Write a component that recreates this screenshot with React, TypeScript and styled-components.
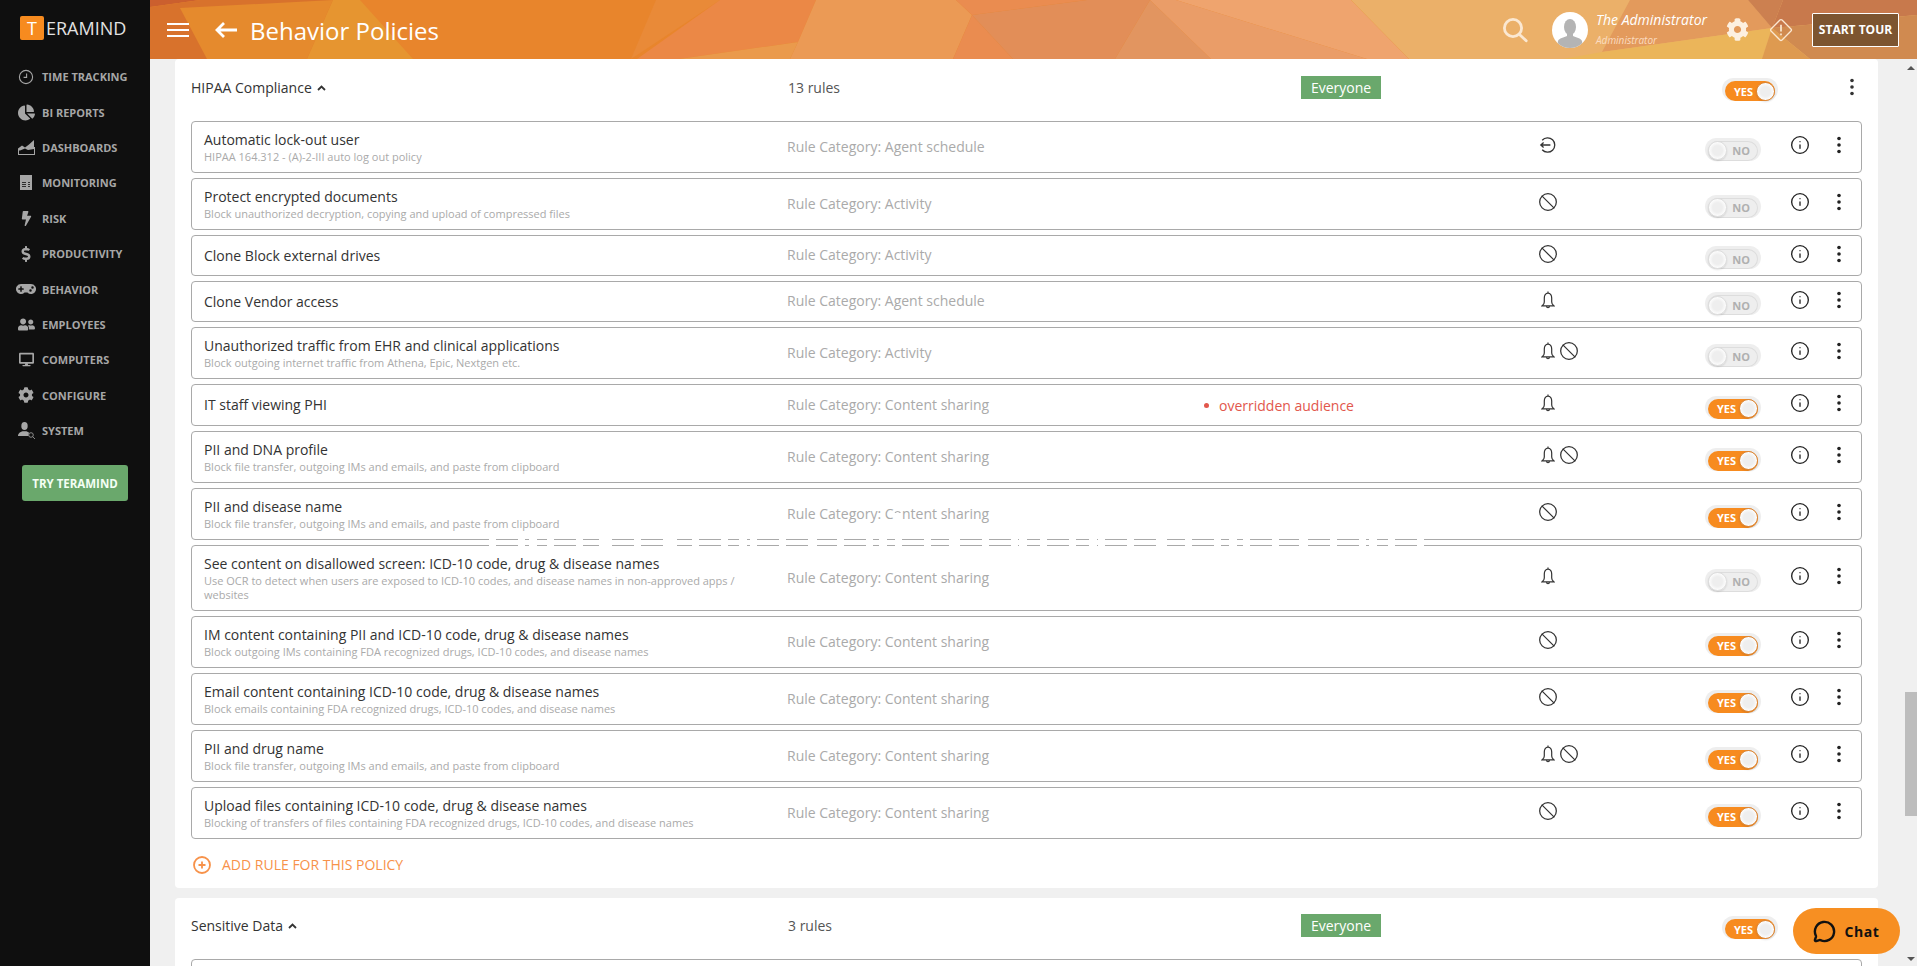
import { FC, ReactNode } from "react";
import styled, { createGlobalStyle } from "styled-components";
import { Ban, Info, MessageCircle } from "lucide-react";
import { FaBolt, FaChartPie, FaCog, FaDesktop, FaDollarSign, FaGamepad, FaUserFriends } from "react-icons/fa";

const GlobalStyle = createGlobalStyle`
    html, body {
        margin: 0;
        height: 100%;
        overflow: hidden;
        background: #f0f0f0;
        font-family: "Open Sans", "Liberation Sans", sans-serif;
    }
    * {
        box-sizing: border-box;
    }
`;

const colors = {
    orange: "#f78b1f",
    green: "#6aa86c",
    text: "#333",
    muted: "#aaa",
    border: "#a9a9a9",
    nav: "#a6a6a6",
};

const Shell = styled.div`
    display: flex;
    width: 100%;
    height: 100vh;
    overflow: hidden;
`;

const Sidebar = styled.nav`
    flex: 0 0 150px;
    background: #0f0f0f;
`;

const Logo = styled.div`
    display: flex;
    align-items: center;
    height: 59px;
    padding: 0 0 3px 20px;
`;

const LogoMark = styled.span`
    display: flex;
    align-items: center;
    justify-content: center;
    width: 24px;
    height: 24px;
    background: ${colors.orange};
    border-radius: 2px;
    color: #fff;
    font-size: 18px;
`;

const LogoText = styled.span`
    margin-left: 2px;
    color: #e2e2e2;
    font-size: 18px;
`;

const NavItem = styled.a`
    display: flex;
    align-items: center;
    height: 35.4px;
    padding-left: 16px;
    color: ${colors.nav};
    font-size: 11px;
    font-weight: 700;
`;

const NavIcon = styled.span`
    display: flex;
    align-items: center;
    justify-content: center;
    flex: 0 0 20px;
    margin-right: 6px;
    color: ${colors.nav};
`;

const TryButton = styled.button`
    display: block;
    width: 106px;
    height: 36px;
    margin: 17px 0 0 22px;
    padding: 0;
    border: 0;
    border-radius: 3px;
    background: ${colors.green};
    color: #f4fff4;
    font-family: inherit;
    font-size: 11.5px;
    font-weight: 700;
`;

const Main = styled.main`
    display: flex;
    flex: 1;
    flex-direction: column;
    min-width: 0;
`;

const Header = styled.header`
    position: relative;
    display: flex;
    flex: 0 0 59px;
    align-items: center;
    overflow: hidden;
    background: #e8852c;
    color: #fff;
`;

const HeaderArt = styled.svg`
    position: absolute;
    inset: 0;
    width: 100%;
    height: 100%;
`;

const HeaderGroup = styled.div`
    position: relative;
    display: flex;
    align-items: center;
`;

const Title = styled.h1`
    margin: 1px 0 0 13px;
    color: #fff;
    font-size: 24px;
    font-weight: 400;
`;

const HeaderRight = styled(HeaderGroup)`
    margin-left: auto;
    padding-right: 18px;
`;

const UserBlock = styled.div`
    display: flex;
    flex-direction: column;
    width: 128px;
    margin-left: 8px;
    font-style: italic;
`;

const UserName = styled.span`
    color: #fff;
    font-size: 14px;
    line-height: 20px;
`;

const UserRole = styled.span`
    color: #fbdcc0;
    font-size: 10px;
    line-height: 20px;
`;

const TourButton = styled.button`
    width: 87px;
    height: 34px;
    margin-left: 19px;
    padding: 0;
    border: 1px solid #fff;
    border-radius: 1px;
    background: #7d5530;
    color: #fff;
    font-family: inherit;
    font-size: 12px;
    font-weight: 700;
`;

const Body = styled.div`
    display: flex;
    flex: 1;
    min-height: 0;
`;

const Content = styled.div`
    flex: 1;
    min-width: 0;
    overflow: hidden;
    padding: 0 27px 0 25px;
`;

const Card = styled.section`
    margin-bottom: 10px;
    padding: 0 16px;
    background: #fff;
    border-radius: 4px;

    &:first-child {
        padding-top: 1px;
    }
`;

const CardHead = styled.div`
    display: grid;
    grid-template-columns: 597px 513px 80px 341px 56px 70px 8px;
    align-items: center;
    height: 55px;
    margin-bottom: 6px;
`;

const CardTitle = styled.div`
    display: flex;
    align-items: center;
    gap: 5px;
    color: ${colors.text};
    font-size: 14px;
`;

const RuleCount = styled.div`
    color: #555;
    font-size: 14px;
`;

const Badge = styled.div`
    height: 23px;
    background: ${colors.green};
    color: #fff;
    font-size: 14px;
    line-height: 23px;
    text-align: center;
`;

const RuleList = styled.div`
    display: flex;
    flex-direction: column;
    gap: 5px;
`;

const Row = styled.div<{ $glitch?: "top" | "bottom" }>`
    position: relative;
    display: grid;
    grid-template-columns: 583px 417px 334px 167px 56px 1fr;
    align-items: center;
    min-height: 41px;
    padding: 8px 0 8px 12px;
    border: 1px solid ${colors.border};
    border-radius: 4px;

    ${(p) =>
        p.$glitch &&
        `&::after {
            content: "";
            position: absolute;
            left: 275px;
            width: 963px;
            height: 1px;
            ${p.$glitch}: -1px;
            background:
                repeating-linear-gradient(90deg, transparent 0 62px, #fff 62px 70px),
                repeating-linear-gradient(90deg, transparent 0 22px, #fff 22px 29px);
        }`}
`;

const EmptyRow = styled(Row)`
    height: 52px;
`;

const RuleText = styled.div`
    padding-right: 30px;
`;

const RuleName = styled.div`
    color: ${colors.text};
    font-size: 14px;
    line-height: 20px;
`;

const RuleDesc = styled.div`
    color: ${colors.muted};
    font-size: 11px;
    line-height: 14px;
`;

const Category = styled.div`
    color: ${colors.muted};
    font-size: 14px;
    line-height: 18px;
    padding-bottom: 1px;
`;

const WornLetter = styled.span`
    color: transparent;
    background: linear-gradient(${colors.muted} 0 45%, transparent 45%);
    -webkit-background-clip: text;
    background-clip: text;
`;

const Override = styled.div`
    display: flex;
    align-items: center;
    min-height: 24px;
    color: #e2574c;
    font-size: 14px;
`;

const OverrideDot = styled.span`
    flex: 0 0 5px;
    height: 5px;
    margin-right: 10px;
    border-radius: 50%;
    background: #e2574c;
`;

const RuleIcons = styled.div`
    display: flex;
    align-items: center;
    gap: 1px;
    transform: translateY(-2px);
    color: #333;
`;

const MarkBox = styled.span`
    display: flex;
    align-items: center;
    justify-content: center;
    width: 20px;
    height: 20px;
`;

const Actions = styled.div`
    display: flex;
    align-items: center;
    gap: 26px;
    transform: translateY(-2px);
    padding-left: 29px;
    color: #222;
`;

const Halo = styled.div`
    width: 56px;
    height: 23px;
    transform: translateY(2px);
    padding: 3px 3px 0;
    border-radius: 12px;
    background: #eee;
`;

const Pill = styled.div<{ $on: boolean }>`
    display: flex;
    flex-direction: ${(p) => (p.$on ? "row" : "row-reverse")};
    align-items: center;
    justify-content: space-between;
    width: 50px;
    height: 20px;
    padding-left: ${(p) => (p.$on ? "9px" : "0")};
    padding-right: ${(p) => (p.$on ? "0" : "8px")};
    border-radius: 10px;
    background: ${(p) => (p.$on ? colors.orange : "#eee")};
    box-shadow: ${(p) => (p.$on ? "none" : "inset 0 0 0 1px #ddd")};
    color: ${(p) => (p.$on ? "#fff" : "#b0b0b0")};
    font-size: 11px;
    font-weight: 700;
`;

const Knob = styled.span<{ $on: boolean }>`
    width: 19px;
    height: 19px;
    border: 1px solid ${(p) => (p.$on ? "#d9873a" : "#ddd")};
    border-radius: 50%;
    background: radial-gradient(#eee 40%, #fff 75%);
    box-shadow: 0 1px 2px rgba(0, 0, 0, 0.12);
`;

const DotsWrap = styled.div`
    display: flex;
    justify-content: center;
    transform: translateY(-1px);
    color: #333;
`;

const AddRule = styled.div`
    display: flex;
    align-items: center;
    height: 49px;
    padding: 2px 0 0 2px;
    color: #f7924a;
    font-size: 14px;
`;

const AddIcon = styled.svg`
    margin-right: 11px;
`;

const Scrollbar = styled.div`
    position: relative;
    display: flex;
    flex: 0 0 12px;
    flex-direction: column;
    align-items: center;
    justify-content: space-between;
    padding: 7px 0 5px;
`;

const ScrollThumb = styled.div`
    position: absolute;
    top: 633px;
    left: 0;
    width: 12px;
    height: 124px;
    background: #bdbdbd;
`;

const ScrollArrow = styled.span<{ $down?: boolean }>`
    width: 0;
    height: 0;
    border-left: 4px solid transparent;
    border-right: 4px solid transparent;
    ${(p) => (p.$down ? "border-top" : "border-bottom")}: 4px solid #555;
`;

const ChatButton = styled.button`
    position: fixed;
    right: 17px;
    bottom: 12px;
    display: flex;
    align-items: center;
    justify-content: center;
    gap: 8px;
    width: 107px;
    height: 46px;
    padding: 0;
    border: 0;
    border-radius: 23px;
    background: #f78f22;
    color: #111;
    font-family: inherit;
    font-size: 14px;
    font-weight: 700;
    letter-spacing: 0.6px;
`;

const IconButton = styled.span<{ $left?: number }>`
    display: flex;
    margin-left: ${(p) => p.$left ?? 0}px;
`;

const Dots: FC = () => (
    <svg width="6" height="18" viewBox="0 0 6 18" fill="currentColor">
        <circle cx="3" cy="2.500" r="1.800" />
        <circle cx="3" cy="9" r="1.800" />
        <circle cx="3" cy="15.500" r="1.800" />
    </svg>
);

const Chevron: FC = () => (
    <svg width="9" height="6" viewBox="0 0 9 6" fill="none" stroke="#333" strokeWidth="1.800">
        <path d="M1 5l3.500-3.500L8 5" />
    </svg>
);

const BellIcon: FC = () => (
    <svg width="14" height="18" viewBox="0 0 14 18" fill="none" stroke="currentColor" strokeWidth="1.200">
        <path d="M7 .6v1.600M7 2.200c-2.500 0-3.700 2.200-3.700 4.800v4c0 1.700-.7 2.800-2.100 3.800h11.600c-1.400-1-2.100-2.100-2.100-3.800V7c0-2.600-1.200-4.800-3.700-4.800zM5.500 14.800c.1 2.600 2.900 2.600 3 0" />
    </svg>
);

const LockoutIcon: FC = () => (
    <svg width="18" height="18" viewBox="0 0 18 18" fill="none" stroke="currentColor" strokeWidth="1.300">
        <path d="M3.200 4.200A7.200 7.200 0 1 1 3.200 13.800M1.800 9h9.600M4.600 6.400L1.800 9l2.800 2.600" />
    </svg>
);

const ClockIcon: FC = () => (
    <svg width="16" height="16" viewBox="0 0 16 16" fill="none" stroke="currentColor" strokeWidth="1.100">
        <circle cx="8" cy="8" r="6.600" />
        <path d="M8.600 4.400v4H5.600" />
    </svg>
);

const AreaChartIcon: FC = () => (
    <svg width="17" height="15" viewBox="0 0 17 15" fill="currentColor">
        <path d="M0 8.500l4-3 3 2 4-3 5-4.500V9l-3 .5-3 .5-3-1.600L2 10.500H0z" />
        <path d="M0 9v6h17V7h-1v7H1V9z" />
    </svg>
);

const DocIcon: FC = () => (
    <svg width="12" height="15" viewBox="0 0 12 15">
        <path d="M0 0h12v15H0z" fill="currentColor" />
        <path d="M2 7.500h4M2 9.500h4M2 11.500h4M8 7.500h2M8 9.500h2M8 11.500h2" stroke="#0f0f0f" strokeWidth="0.800" />
    </svg>
);

const SystemIcon: FC = () => (
    <svg width="17" height="17" viewBox="0 0 17 17" fill="currentColor">
        <ellipse cx="6.500" cy="4" rx="3.200" ry="4" />
        <path d="M0 14c0-3 2.500-4 4.500-4.800h4c1 .4 2 .9 2.600 1.600a4 4 0 0 0-.6 3.200z" />
        <circle cx="13" cy="13" r="2.300" fill="none" stroke="currentColor" strokeWidth="0.800" />
        <path d="M14.700 14.700L17 17" stroke="currentColor" strokeWidth="0.800" />
    </svg>
);

const SearchIcon: FC = () => (
    <svg width="26" height="26" viewBox="0 0 26 26" fill="none" stroke="#fbe8d2" strokeWidth="2.800">
        <circle cx="11" cy="11" r="8.600" />
        <path d="M17.200 17.200l7 6.600" strokeLinecap="round" />
    </svg>
);

const Avatar: FC = () => (
    <svg width="36" height="36" viewBox="0 0 36 36">
        <defs>
            <clipPath id="avatar-clip">
                <circle cx="18" cy="18" r="18" />
            </clipPath>
        </defs>
        <circle cx="18" cy="18" r="18" fill="#fff" />
        <g clipPath="url(#avatar-clip)" fill="#b4b4b4">
            <ellipse cx="18" cy="15" rx="6" ry="8" />
            <path d="M15 21h6v3c3 1.500 8 2 9 5l1 7H5l1-7c1-3 6-3.500 9-5z" />
        </g>
    </svg>
);

const DiamondIcon: FC = () => (
    <svg width="24" height="24" viewBox="0 0 24 24" fill="none" stroke="#fbe8d2" strokeWidth="1.300">
        <rect x="4.200" y="4.200" width="15.600" height="15.600" rx="1.500" transform="rotate(45 12 12)" />
        <path d="M12 6.800v6.700M12 15.600v1.600" strokeWidth="1.700" />
    </svg>
);

const Hamburger: FC = () => (
    <svg width="22" height="14" viewBox="0 0 22 14" stroke="#fff" strokeWidth="1.800">
        <path d="M0 1h22M0 7h22M0 13h22" />
    </svg>
);

const BackArrow: FC = () => (
    <svg width="22" height="16" viewBox="0 0 22 16" fill="none" stroke="#fff" strokeWidth="2.800">
        <path d="M22 8H2M9 1L2 8l7 7" />
    </svg>
);

const headerShapes: [string, string][] = [
    ["150,0 200,0 150,7", "#cb5f2e"],
    ["150,7 200,0 333,0 307,59 150,59", "#d8722c"],
    ["180,8 333,0 307,59 207,59", "#e58a2d"],
    ["333,0 360,0 413,59 307,59", "#e69530"],
    ["656,0 720,0 631,59", "#e98a38"],
    ["720,0 816,0 798,42 679,59 637,59", "#eb8846"],
    ["798,42 679,59 790,59", "#ea9a4c"],
    ["816,0 956,0 972,15 953,59 790,59 798,42", "#eb9a55"],
    ["956,0 1087,0 972,15", "#ea8c50"],
    ["972,15 1013,59 953,59", "#ea8c50"],
    ["972,15 1087,0 1150,0 1115,59 1013,59", "#e28e58"],
    ["1150,0 1211,59 1115,59", "#e29560"],
    ["1150,0 1176,0 1367,59 1211,59", "#ea9d68"],
    ["1176,0 1351,0 1409,59 1367,59", "#efa46e"],
    ["1351,0 1917,0 1917,59 1409,59", "#ebb069"],
    ["1630,0 1748,0 1772,28 1602,52", "#e39a5c"],
    ["1563,59 1602,52 1772,28 1762,59", "#ebb55a"],
    ["1748,0 1783,0 1772,28", "#cc8050"],
    ["1783,0 1917,0 1917,15 1772,28", "#c8794c"],
    ["1772,28 1917,15 1917,59 1810,59", "#d08a50"],
    ["1772,28 1810,59 1762,59", "#de9a50"],
];

const navItems: [string, ReactNode][] = [
    ["TIME TRACKING", <ClockIcon />],
    ["BI REPORTS", <FaChartPie size={17} />],
    ["DASHBOARDS", <AreaChartIcon />],
    ["MONITORING", <DocIcon />],
    ["RISK", <FaBolt size={15} />],
    ["PRODUCTIVITY", <FaDollarSign size={16} />],
    ["BEHAVIOR", <FaGamepad size={20} />],
    ["EMPLOYEES", <FaUserFriends size={17} />],
    ["COMPUTERS", <FaDesktop size={15} />],
    ["CONFIGURE", <FaCog size={16} />],
    ["SYSTEM", <SystemIcon />],
];

type Mark = "bell" | "ban" | "lockout";

interface RuleData {
    name: string;
    desc?: string;
    category: ReactNode;
    marks: Mark[];
    on: boolean;
    overridden?: boolean;
    glitch?: "top" | "bottom";
}

const sharing = "Content sharing";

const rules: RuleData[] = [
    { name: "Automatic lock-out user", desc: "HIPAA 164.312 - (A)-2-III auto log out policy", category: "Agent schedule", marks: ["lockout"], on: false },
    { name: "Protect encrypted documents", desc: "Block unauthorized decryption, copying and upload of compressed files", category: "Activity", marks: ["ban"], on: false },
    { name: "Clone Block external drives", category: "Activity", marks: ["ban"], on: false },
    { name: "Clone Vendor access", category: "Agent schedule", marks: ["bell"], on: false },
    { name: "Unauthorized traffic from EHR and clinical applications", desc: "Block outgoing internet traffic from Athena, Epic, Nextgen etc.", category: "Activity", marks: ["bell", "ban"], on: false },
    { name: "IT staff viewing PHI", category: sharing, marks: ["bell"], on: true, overridden: true },
    { name: "PII and DNA profile", desc: "Block file transfer, outgoing IMs and emails, and paste from clipboard", category: sharing, marks: ["bell", "ban"], on: true },
    {
        name: "PII and disease name",
        desc: "Block file transfer, outgoing IMs and emails, and paste from clipboard",
        category: (
            <>
                C<WornLetter>o</WornLetter>ntent sharing
            </>
        ),
        marks: ["ban"],
        on: true,
        glitch: "bottom",
    },
    { name: "See content on disallowed screen: ICD-10 code, drug & disease names", desc: "Use OCR to detect when users are exposed to ICD-10 codes, and disease names in non-approved apps / websites", category: sharing, marks: ["bell"], on: false, glitch: "top" },
    { name: "IM content containing PII and ICD-10 code, drug & disease names", desc: "Block outgoing IMs containing FDA recognized drugs, ICD-10 codes, and disease names", category: sharing, marks: ["ban"], on: true },
    { name: "Email content containing ICD-10 code, drug & disease names", desc: "Block emails containing FDA recognized drugs, ICD-10 codes, and disease names", category: sharing, marks: ["ban"], on: true },
    { name: "PII and drug name", desc: "Block file transfer, outgoing IMs and emails, and paste from clipboard", category: sharing, marks: ["bell", "ban"], on: true },
    { name: "Upload files containing ICD-10 code, drug & disease names", desc: "Blocking of transfers of files containing FDA recognized drugs, ICD-10 codes, and disease names", category: sharing, marks: ["ban"], on: true },
];

const Switch: FC<{ on: boolean }> = ({ on }) => (
    <Halo>
        <Pill $on={on}>
            <span>{on ? "YES" : "NO"}</span>
            <Knob $on={on} />
        </Pill>
    </Halo>
);

const RuleMark: FC<{ mark: Mark }> = ({ mark }) => {
    if (mark === "bell") return <BellIcon />;
    if (mark === "lockout") return <LockoutIcon />;
    return <Ban size={20} strokeWidth={1.5} />;
};

const RuleRow: FC<{ rule: RuleData }> = ({ rule }) => (
    <Row $glitch={rule.glitch}>
        <RuleText>
            <RuleName>{rule.name}</RuleName>
            {rule.desc && <RuleDesc>{rule.desc}</RuleDesc>}
        </RuleText>
        <Category>Rule Category: {rule.category}</Category>
        <div>
            {rule.overridden && (
                <Override>
                    <OverrideDot />
                    overridden audience
                </Override>
            )}
        </div>
        <RuleIcons>
            {rule.marks.map((mark) => (
                <MarkBox key={mark}>
                    <RuleMark mark={mark} />
                </MarkBox>
            ))}
        </RuleIcons>
        <Switch on={rule.on} />
        <Actions>
            <Info size={20} strokeWidth={1.6} />
            <Dots />
        </Actions>
    </Row>
);

const PolicyHead: FC<{ title: string; count: string }> = ({ title, count }) => (
    <CardHead>
        <CardTitle>
            {title}
            <Chevron />
        </CardTitle>
        <RuleCount>{count}</RuleCount>
        <Badge>Everyone</Badge>
        <span />
        <Switch on />
        <span />
        <DotsWrap>
            <Dots />
        </DotsWrap>
    </CardHead>
);

export default function App() {
    return (
        <Shell>
            <GlobalStyle />
            <Sidebar>
                <Logo>
                    <LogoMark>T</LogoMark>
                    <LogoText>ERAMIND</LogoText>
                </Logo>
                {navItems.map(([label, icon]) => (
                    <NavItem key={label}>
                        <NavIcon>{icon}</NavIcon>
                        {label}
                    </NavItem>
                ))}
                <TryButton>TRY TERAMIND</TryButton>
            </Sidebar>
            <Main>
                <Header>
                    <HeaderArt viewBox="150 0 1767 59" preserveAspectRatio="none">
                        {headerShapes.map(([points, fill]) => (
                            <polygon key={points} points={points} fill={fill} />
                        ))}
                    </HeaderArt>
                    <HeaderGroup>
                        <IconButton $left={17}>
                            <Hamburger />
                        </IconButton>
                        <IconButton $left={26}>
                            <BackArrow />
                        </IconButton>
                        <Title>Behavior Policies</Title>
                    </HeaderGroup>
                    <HeaderRight>
                        <SearchIcon />
                        <IconButton $left={24}>
                            <Avatar />
                        </IconButton>
                        <UserBlock>
                            <UserName>The Administrator</UserName>
                            <UserRole>Administrator</UserRole>
                        </UserBlock>
                        <IconButton $left={2}>
                            <FaCog size={23} color="#fdf0e0" />
                        </IconButton>
                        <IconButton $left={20}>
                            <DiamondIcon />
                        </IconButton>
                        <TourButton>START TOUR</TourButton>
                    </HeaderRight>
                </Header>
                <Body>
                    <Content>
                        <Card>
                            <PolicyHead title="HIPAA Compliance" count="13 rules" />
                            <RuleList>
                                {rules.map((rule) => (
                                    <RuleRow key={rule.name} rule={rule} />
                                ))}
                            </RuleList>
                            <AddRule>
                                <AddIcon width="18" height="18" viewBox="0 0 18 18" fill="none" stroke="#f7924a" strokeWidth="1.800">
                                    <circle cx="9" cy="9" r="8" />
                                    <path d="M9 5.500v7M5.500 9h7" />
                                </AddIcon>
                                ADD RULE FOR THIS POLICY
                            </AddRule>
                        </Card>
                        <Card>
                            <PolicyHead title="Sensitive Data" count="3 rules" />
                            <RuleList>
                                <EmptyRow />
                            </RuleList>
                        </Card>
                    </Content>
                    <Scrollbar>
                        <ScrollArrow />
                        <ScrollThumb />
                        <ScrollArrow $down />
                    </Scrollbar>
                </Body>
            </Main>
            <ChatButton>
                <MessageCircle size={23} strokeWidth={2.5} />
                Chat
            </ChatButton>
        </Shell>
    );
}
